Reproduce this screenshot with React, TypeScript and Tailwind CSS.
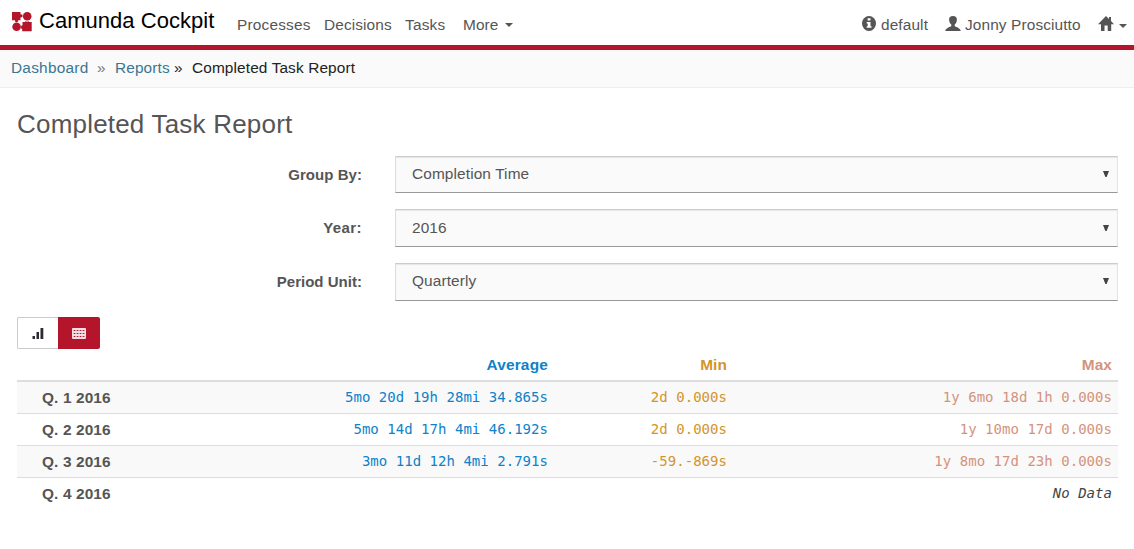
import React from "react";

const options = [
  { label: "Group By:", value: "Completion Time", labelClass: "tracking-[0.05px]", rowClass: "h-[37px]", valueClass: "pt-[6px]" },
  { label: "Year:", value: "2016", labelClass: "tracking-[0.4px]", rowClass: "h-[38px]", valueClass: "pt-[7px]" },
  { label: "Period Unit:", value: "Quarterly", labelClass: "tracking-[0.02px]", rowClass: "h-[38px]", valueClass: "pt-[6px]" },
];

const rows = [
  { name: "Q. 1 2016", avg: "5mo 20d 19h 28mi 34.865s", min: "2d 0.000s", max: "1y 6mo 18d 1h 0.000s" },
  { name: "Q. 2 2016", avg: "5mo 14d 17h 4mi 46.192s", min: "2d 0.000s", max: "1y 10mo 17d 0.000s" },
  { name: "Q. 3 2016", avg: "3mo 11d 12h 4mi 2.791s", min: "-59.-869s", max: "1y 8mo 17d 23h 0.000s" },
  { name: "Q. 4 2016", avg: "", min: "", max: "" },
];

function Logo() {
  return (
    <svg className="mt-3 ml-3 h-5 w-5 shrink-0" viewBox="0 0 20 20" fill="#b5152b">
      <path d="M0 0H8.5V2.4Q11 2 10.6 4Q10.3 5.7 8.5 5.3V8.3H6.3Q6.4 10.2 4.5 10.2Q2.6 10.2 2.9 8.3H0Z" />
      <circle cx="15.2" cy="4.3" r="4.3" />
      <circle cx="4.6" cy="14.8" r="4.3" />
      <path d="M10.5 10H13Q13 8.7 15 9.7Q17 8.8 17 10H19.7V19.2H10.2V17.2Q8.8 17 9 15Q8.8 13.3 10.5 13.3Z" />
    </svg>
  );
}

function Caret() {
  return (
    <svg className="h-1 w-2" viewBox="0 0 8 4" fill="#555">
      <path d="M0 0H8L4 4Z" />
    </svg>
  );
}

function Header() {
  return (
    <header className="flex h-[50px] border-b-[5px] border-[#b5152b] bg-white text-[#555]">
      <Logo />
      <span className="ml-[7px] w-[198px] shrink-0 pt-[5px] text-[22px] leading-8 tracking-[0.03px] text-black">Camunda Cockpit</span>
      <nav className="flex items-start pt-[14px] leading-[22px]">
        <a className="w-[87px] tracking-[0.2px]">Processes</a>
        <a className="w-[81px]">Decisions</a>
        <a className="w-[58px] tracking-[0.2px]">Tasks</a>
        <a className="flex items-center gap-[6px]">More <Caret /></a>
      </nav>
      <div className="ml-auto flex pt-[14px] pr-[7px] leading-[22px]">
        <div className="flex w-[83px]">
          <svg className="mt-[2px] mr-[5px] h-[15px] w-[14px]" viewBox="0 0 14 14" preserveAspectRatio="none">
            <circle cx="7" cy="7" r="7" fill="#555" />
            <path fill="#fff" d="M5.6 2H8.5V4.2H5.6ZM4.7 5.5H8.5V9.5H9.5V11H4.7V9.5H5.7V7H4.7Z" />
          </svg>
          default
        </div>
        <div className="flex w-[153px]">
          <svg className="mt-[2px] mr-[4px] h-[15px] w-[16px]" viewBox="0 0 16 15" fill="#555">
            <path d="M8 0C10.6 0 12.1 1.5 11.9 3.8C11.7 6.2 10.9 7.8 9.7 8.6V10C10 11 15.4 11.6 15.7 15H.3C.6 11.6 6 11 6.3 10V8.6C5.1 7.8 4.3 6.2 4.1 3.8C3.9 1.5 5.4 0 8 0Z" />
          </svg>
          <span>Jonny Prosciutto</span>
        </div>
        <div className="flex">
          <svg className="mt-[2px] mr-[5px] h-[15px] w-4" viewBox="0 0 16 15" fill="#555">
            <path d="M8 0L11 3V1H13V5L16 8.2H13.2V15H9.7V9.5H6.5V15H3V8.2H0Z" />
          </svg>
          <span className="mt-[10px] flex h-1"><Caret /></span>
        </div>
      </div>
    </header>
  );
}

function Breadcrumbs() {
  return (
    <div className="flex h-[38px] border-b border-[#eee] bg-[#fafafa] pt-[7px] pl-[11px] leading-[22px] text-[#222]">
      <a className="w-[86px] tracking-[0.25px] text-[#3b7693]">Dashboard</a>
      <span className="w-[18px] text-[#777]">»</span>
      <a className="w-[59px] text-[#3b7693]">Reports</a>
      <span className="w-[18px]">»</span>
      <span>Completed Task Report</span>
    </div>
  );
}

function Filters() {
  return (
    <form className="flex flex-col gap-4 pt-[15px]">
      {options.map((o) => (
        <div key={o.label} className={`flex ${o.rowClass}`}>
          <label className={`w-[345px] pt-2 text-right text-[15px] leading-[22px] font-bold ${o.labelClass}`}>{o.label}</label>
          <div className={`ml-[33px] flex w-[723px] border border-t-[#ccc] border-r-[#e5e5e5] border-b-[#999] border-l-[#ddd] bg-[#fafafa] pr-[8px] pl-[16px] leading-[22px] shadow-[inset_0_1px_1px_rgba(0,0,0,0.08)] ${o.valueClass}`}>
            <span className="grow">{o.value}</span>
            <svg className="mt-2 h-[6px] w-[6px]" viewBox="0 0 6 6" fill="#444">
              <path d="M0 0H6L3.6 6H2.4Z" />
            </svg>
          </div>
        </div>
      ))}
    </form>
  );
}

function ViewToggle() {
  return (
    <div className="mt-[16px] flex h-8 w-[83px]">
      <button className="flex w-[41px] rounded-l-[2px] border border-r-0 border-[#ccc] bg-white pt-[9px] pl-[14px]">
        <svg className="h-3 w-3" viewBox="0 0 12 12" fill="#2b2b33">
          <path d="M.5 9H3V12H.5ZM4.5 5H7V12H4.5ZM8.5 1H11.3V12H8.5Z" />
        </svg>
      </button>
      <button className="flex w-[42px] rounded-r-[2px] bg-[#b5152b] pt-[11px] pl-[14px]">
        <svg className="h-[11px] w-[14px]" viewBox="0 0 14 11">
          <rect width="14" height="11" rx="1" fill="#f3dfe3" />
          <path d="M2 2.5H12M2 5.5H12M2 8.5H12" stroke="#b5152b" strokeWidth="1" strokeDasharray="1 2" />
          <path d="M1 2.5H13M1 5.5H13M1 8.5H13" stroke="#b5152b" strokeOpacity="0.35" />
        </svg>
      </button>
    </div>
  );
}

const mono = "pb-px pr-[6px] text-right font-['DejaVu_Sans_Mono',monospace] text-[14px] tracking-[0.03px] font-normal";

function ReportTable() {
  return (
    <table className="w-[1101px] table-fixed border-collapse leading-[22px]">
      <colgroup>
        <col className="w-[180px]" />
        <col className="w-[357px]" />
        <col className="w-[179px]" />
        <col className="w-[385px]" />
      </colgroup>
      <thead>
        <tr className="h-8 border-b-2 border-[#ddd] text-right font-bold">
          <td />
          <td className="pr-[6px] tracking-[0.2px] text-[#0d82c9]">Average</td>
          <td className="pr-[6px] text-[#d4942b]">Min</td>
          <td className="pr-[6px] text-[#d4937d]">Max</td>
        </tr>
      </thead>
      <tbody>
        {rows.map((r, i) => (
          <tr key={r.name} className="h-8 border-b border-[#ddd] odd:bg-[#f9f9f9] last:border-0 last:bg-white">
            <td className="pt-[2px] pl-[25px] font-bold">{r.name}</td>
            <td className={`${mono} text-[#0d82c9]`}>{r.avg}</td>
            <td className={`${mono} text-[#d4942b]`}>{r.min}</td>
            <td className={i === 3 ? `${mono} text-[#444] italic` : `${mono} text-[#d4937d]`}>{r.max || "No Data"}</td>
          </tr>
        ))}
      </tbody>
    </table>
  );
}

export default function App() {
  return (
    <div className="h-[549px] w-[1134px] overflow-hidden bg-white font-['Liberation_Sans',Arial,sans-serif] text-[15.4px] tracking-[0.12px] whitespace-nowrap text-[#555]">
      <Header />
      <Breadcrumbs />
      <main className="pl-[17px]">
        <h1 className="pt-5 text-[26px] leading-[33px] tracking-[0.2px]">Completed Task Report</h1>
        <Filters />
        <ViewToggle />
        <ReportTable />
      </main>
    </div>
  );
}
